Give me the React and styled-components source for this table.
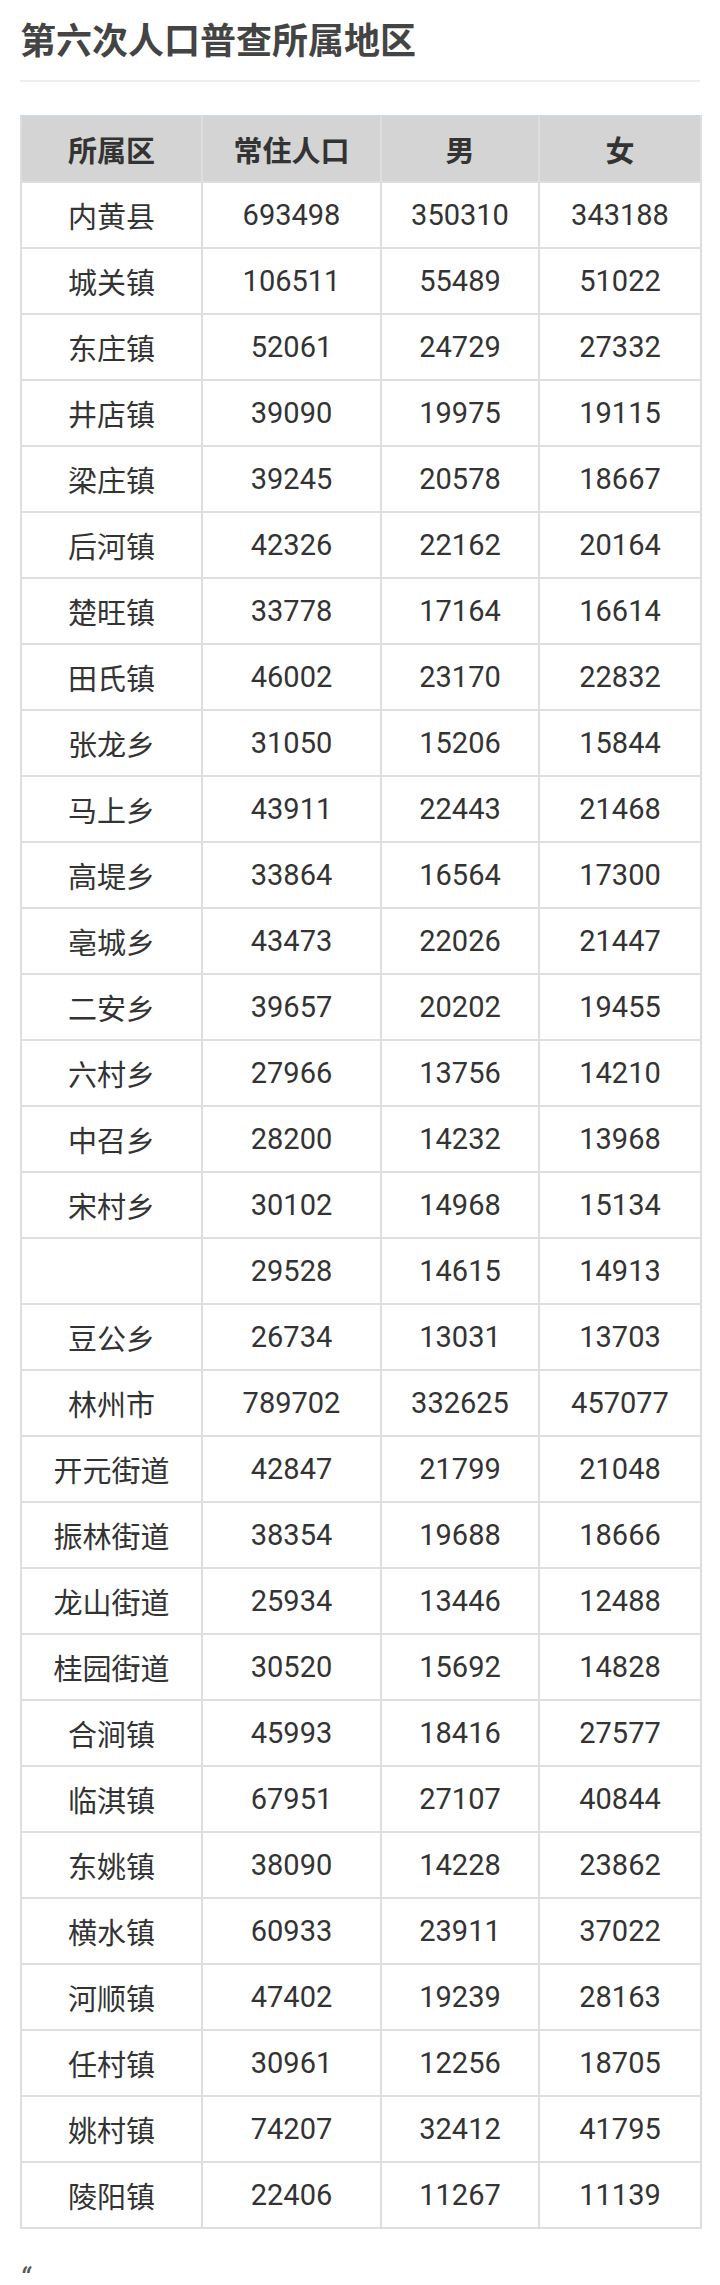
import React from "react";
import styled, { createGlobalStyle } from "styled-components";

const GlobalStyle = createGlobalStyle`
  body {
    margin: 0;
    background: #fff;
    font-family: Roboto, "Noto Sans CJK SC", sans-serif;
    color: #333;
  }
`;

const Page = styled.div`
  padding: 0 20px;
  width: 680px;
`;

const Title = styled.h2`
  margin: 0;
  padding-top: 13px;
  font-size: 36px;
  line-height: 50px;
  font-weight: bold;
  color: #444;
  font-family: "Noto Sans CJK SC", sans-serif;
`;

const Divider = styled.div`
  height: 2px;
  background: #eee;
  margin-top: 17px;
`;

const Table = styled.table`
  margin-top: 33px;
  width: 680px;
  border-collapse: collapse;
  table-layout: fixed;
  border-top: 2px solid #c9d8e6;
  border-left: 2px solid #cfdce8;
  border-bottom: 2px solid #d3dde6;
`;

const HeadCell = styled.th`
  height: 64px;
  padding: 0;
  background: #d4d4d4;
  border: 2px solid #dedede;
  border-top: 2px solid #c9d8e6;
  font-size: 29px;
  font-weight: bold;
  color: #333;
  font-family: "Noto Sans CJK SC", sans-serif;
  text-align: center;
`;

const Cell = styled.td`
  height: 64px;
  padding: 0;
  border: 2px solid #dedede;
  font-size: 29px;
  color: #333;
  text-align: center;
`;

const Quote = styled.p`
  margin: 30px 0 0;
  font-size: 29px;
  line-height: 40px;
  color: #555;
  font-style: italic;
`;

const rows = [
  ["内黄县", 693498, 350310, 343188],
  ["城关镇", 106511, 55489, 51022],
  ["东庄镇", 52061, 24729, 27332],
  ["井店镇", 39090, 19975, 19115],
  ["梁庄镇", 39245, 20578, 18667],
  ["后河镇", 42326, 22162, 20164],
  ["楚旺镇", 33778, 17164, 16614],
  ["田氏镇", 46002, 23170, 22832],
  ["张龙乡", 31050, 15206, 15844],
  ["马上乡", 43911, 22443, 21468],
  ["高堤乡", 33864, 16564, 17300],
  ["亳城乡", 43473, 22026, 21447],
  ["二安乡", 39657, 20202, 19455],
  ["六村乡", 27966, 13756, 14210],
  ["中召乡", 28200, 14232, 13968],
  ["宋村乡", 30102, 14968, 15134],
  ["", 29528, 14615, 14913],
  ["豆公乡", 26734, 13031, 13703],
  ["林州市", 789702, 332625, 457077],
  ["开元街道", 42847, 21799, 21048],
  ["振林街道", 38354, 19688, 18666],
  ["龙山街道", 25934, 13446, 12488],
  ["桂园街道", 30520, 15692, 14828],
  ["合涧镇", 45993, 18416, 27577],
  ["临淇镇", 67951, 27107, 40844],
  ["东姚镇", 38090, 14228, 23862],
  ["横水镇", 60933, 23911, 37022],
  ["河顺镇", 47402, 19239, 28163],
  ["任村镇", 30961, 12256, 18705],
  ["姚村镇", 74207, 32412, 41795],
  ["陵阳镇", 22406, 11267, 11139],
];

const App = () => {
  return (
    <Page>
      <GlobalStyle />
      <Title>第六次人口普查所属地区</Title>
      <Divider />
      <Table>
        <colgroup>
          <col style={{ width: 181 }} />
          <col style={{ width: 179 }} />
          <col style={{ width: 158 }} />
          <col style={{ width: 162 }} />
        </colgroup>
        <thead>
          <tr>
            <HeadCell>所属区</HeadCell>
            <HeadCell>常住人口</HeadCell>
            <HeadCell>男</HeadCell>
            <HeadCell>女</HeadCell>
          </tr>
        </thead>
        <tbody>
          {rows.map((r, i) => (
            <tr key={i}>
              {r.map((v, j) => (
                <Cell key={j}>{v}</Cell>
              ))}
            </tr>
          ))}
        </tbody>
      </Table>
      <Quote>“</Quote>
    </Page>
  );
};

export default App;
